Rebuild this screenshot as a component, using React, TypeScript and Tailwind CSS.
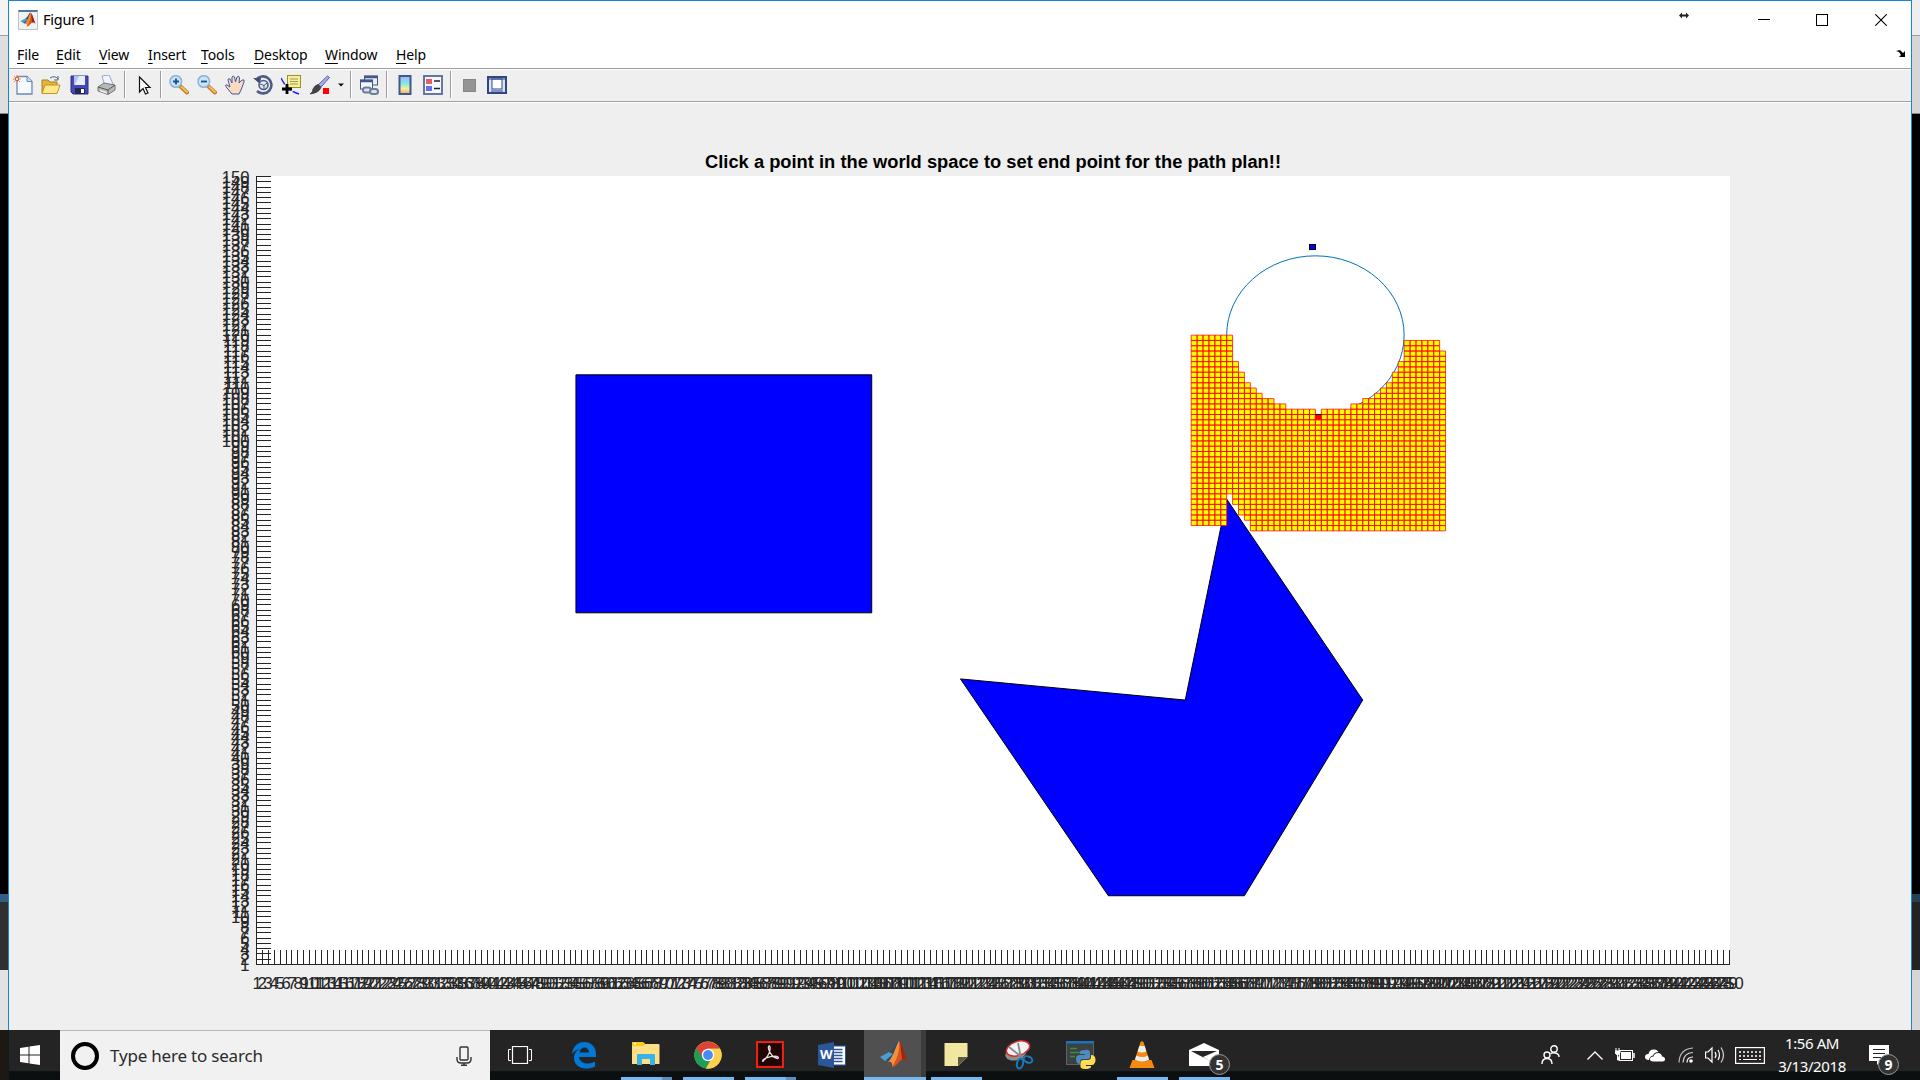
import React from "react";
import type { ReactNode } from "react";

/* ---------- helpers ---------- */

function Ico({ c = "", s = 20, children }: { c?: string; s?: number; children: ReactNode }) {
  return (
    <svg className={"block shrink-0 " + c} width={s} height={s} viewBox={`0 0 ${s} ${s}`} fill="none">
      {children}
    </svg>
  );
}

function MatlabMark() {
  return (
    <>
      <path d="M1 17 L10 12 L14 14 L9 20 L6 21 Z" fill="#4b9fd0" />
      <path d="M10 12 C14 11 15 6 18 2 L20 1 L16 14 L9 22 L7 20 L14 14 Z" fill="#2c4f6e" />
      <path d="M20 1 C23 4 25 13 29 22 C26 19 24 19 21 21 C18 24 16 27 13 27 C14 23 12 21 9 22 C14 18 17 6 20 1 Z" fill="#d9541e" />
      <path d="M20 1 C21 8 19 18 13 27 C14 23 12 21 9 22 C14 18 17 6 20 1 Z" fill="#f0913a" />
      <path d="M21 2 C24 6 26 15 29 22 C26 19 25 19 23 20 Z" fill="#9c2613" />
    </>
  );
}

/* ---------- menu bar ---------- */

const MENUS: [string, string][] = [
  ["File", "w-[39px]"],
  ["Edit", "w-[43px]"],
  ["View", "w-[49px]"],
  ["Insert", "w-[53px]"],
  ["Tools", "w-[53px]"],
  ["Desktop", "w-[71px]"],
  ["Window", "w-[71px]"],
  ["Help", "w-[40px]"],
];

function MenuBar() {
  return (
    <div className="flex h-[31px] shrink-0 items-center bg-white pt-[2px] pl-[8px] text-[14px] leading-[18px] tracking-[-0.12px] text-black">
      {MENUS.map(([m, w]) => (
        <span key={m} className={w}>
          <span className="underline underline-offset-[3px]">{m[0]}</span>
          {m.slice(1)}
        </span>
      ))}
      <svg className="mr-[5px] mb-[2px] ml-auto" width="10" height="8" viewBox="0 0 10 8">
        <path d="M0 1 L4 0 L7 3 L9 1 V7 H3 L5 5 L3 2 Z" fill="#000" />
      </svg>
    </div>
  );
}

/* ---------- toolbar ---------- */

function Sep({ c }: { c: string }) {
  return <div className={"h-[27px] w-[2px] shrink-0 border-l border-[#9b9b9b] bg-white " + c} />;
}

function Toolbar() {
  return (
    <div className="box-content flex h-[29px] shrink-0 items-center border-b border-[#a0a0a0] bg-[#efefef] pb-[2px]">
      <Ico c="ml-[4px]">
        <path d="M4 1.500 H14 L19 6.500 V19 H4 Z" fill="#f5faff" stroke="#6d87b8" strokeWidth="1.300" />
        <path d="M14 1.500 V6.500 H19" fill="#cfe0f5" stroke="#6d87b8" />
        <path d="M4 0 V8 M0 4 H8 M1 1 L7 7 M7 1 L1 7" stroke="#e98a55" />
        <circle cx="4" cy="4" r="1.600" fill="#fff" stroke="#d8582b" />
      </Ico>
      <Ico c="ml-[8px]">
        <path d="M1 5 H7 L9 7 H16 V18 H1 Z" fill="#e3b440" stroke="#a97e1a" />
        <path d="M4 10 H19 L16 18.500 H1 Z" fill="#ffe98a" stroke="#c39422" />
        <path d="M9 3 Q14 0 17 4 M17 1 V5 H13" stroke="#4a617b" />
      </Ico>
      <Ico c="ml-[9px]">
        <path d="M1 1 H18 V19 H3 L1 17 Z" fill="#4549b5" stroke="#2c2f85" />
        <rect x="4" y="1" width="11" height="9" fill="#e6ecfb" />
        <path d="M4 1 H9 L5 10 H4 Z" fill="#b4c4f0" />
        <rect x="5" y="13" width="10" height="6" fill="#23264f" />
        <rect x="11" y="14" width="3" height="4" fill="#fff" />
      </Ico>
      <Ico c="ml-[7px]">
        <path d="M5 1 L12 0 L16 9 L8 11 Z" fill="#f2f7ff" stroke="#93a9c8" />
        <path d="M1 12 L7 8 L18 10 V15 L11 19.500 L1 16 Z" fill="#b9b9b9" stroke="#777" />
        <path d="M1 12 L11 15 L18 10 M11 15 V19" stroke="#555" />
        <path d="M3 15.500 L10 18" stroke="#eee" strokeWidth="1.500" />
      </Ico>
      <Sep c="ml-[7px]" />
      <Ico c="ml-[9px]">
        <path d="M4.500 2 V17 L8 13.500 L10.500 19 L13 18 L10.500 12.500 H15 Z" fill="#fff" stroke="#111" strokeWidth="1.200" />
      </Ico>
      <Sep c="ml-[5px]" />
      {[true, false].map((plus) => (
        <Ico key={String(plus)} c={plus ? "ml-[7px]" : "ml-[8px]"}>
          <path d="M11.500 11.500 L18 17.500" stroke="#bf7b26" strokeWidth="4" strokeLinecap="round" />
          <path d="M12.500 12 L18 17" stroke="#f5bd62" strokeWidth="2" strokeLinecap="round" />
          <circle cx="6.800" cy="6.500" r="5.800" fill="#c5e6fa" stroke="#8fb1d4" strokeWidth="1.500" />
          <path d={plus ? "M4 6.500 H10 M7 3.500 V9.500" : "M4 6.500 H10"} stroke="#1f4e8c" strokeWidth="1.800" />
        </Ico>
      ))}
      <Ico c="ml-[8px]">
        <path
          d="M7 19 L2 13 Q-1 9 2 10 L5 12 L3 5 Q3 3 5 4 L7 8 L7 2 Q8 0 9.500 2 L10.500 7 L12 2 Q14 0 14.500 3 L14 8 L17 5 Q20 4 19 7 L16 15 L14 19 Z"
          fill="#fbdcc0"
          stroke="#40579b"
        />
      </Ico>
      <Ico c="ml-[8px]">
        <path d="M3 5 A8.500 8.500 0 1 1 4 16" stroke="#4b5d85" strokeWidth="2.600" />
        <path d="M0 3 H8 L7 9 Z" fill="#3f5078" />
        <circle cx="10.500" cy="10" r="4.500" fill="#dfe6f2" stroke="#4b5d85" strokeWidth="1.600" />
        <path d="M7 9 L11 10.500 L14 8 M11 10 V14" stroke="#4b5d85" />
      </Ico>
      <Ico c="ml-[8px]">
        <path d="M0 3 Q3 9 7 13 T18 19" stroke="#1b1bff" strokeWidth="1.400" strokeDasharray="7 2" />
        <rect x="6.500" y="0.500" width="13" height="12" fill="#f5f0a0" stroke="#9c8f2c" />
        <path d="M9 4 H17 M9 6.500 H17 M9 9 H17" stroke="#a69a45" />
        <path d="M1 14 H11 M6 9 V19" stroke="#000" strokeWidth="2.800" />
      </Ico>
      <Ico c="ml-[9px]">
        <path d="M17.500 1 L19.500 2.500 L11 12 L8 10 Z" fill="#a9aee8" stroke="#565aa8" />
        <path d="M8 9.500 L11 12.500 Q9 18 0 19 Q3 17 3 14 Q5 10 8 9.500 Z" fill="#444" stroke="#222" strokeWidth=".6" />
        <rect x="13" y="13" width="6" height="6" fill="#f00" />
      </Ico>
      <svg className="ml-[8px] block shrink-0" width="6" height="4" viewBox="0 0 6 4">
        <path d="M0 .5 H6 L3 3.500 Z" fill="#111" />
      </svg>
      <Sep c="ml-[6px]" />
      <Ico c="ml-[7px]">
        <rect x="5.500" y="1" width="13" height="9" fill="#e8eefb" stroke="#41578a" />
        <path d="M5 2 H19" stroke="#41578a" strokeWidth="2.500" />
        <rect x="1.500" y="5" width="12" height="9" fill="#f4f7fd" stroke="#41578a" />
        <path d="M1 6 H14" stroke="#41578a" strokeWidth="2.500" />
        <rect x="4" y="12.500" width="8" height="5" rx="2.500" stroke="#6c7e96" strokeWidth="2" fill="#dce3ec" />
        <rect x="11" y="14" width="8" height="5" rx="2.500" stroke="#6c7e96" strokeWidth="2" fill="#dce3ec" />
      </Ico>
      <Sep c="ml-[7px]" />
      <Ico c="ml-[7px]">
        <defs>
          <linearGradient id="cb" x1="0" y1="0" x2="0" y2="1">
            <stop offset="0" stopColor="#aab4ff" />
            <stop offset=".4" stopColor="#7fe6ea" />
            <stop offset=".7" stopColor="#f4f09a" />
            <stop offset="1" stopColor="#f2a185" />
          </linearGradient>
        </defs>
        <rect x="4.500" y="1" width="11" height="18" fill="url(#cb)" stroke="#41578a" strokeWidth="2" />
      </Ico>
      <Ico c="ml-[8px]">
        <rect x="1" y="1" width="18" height="18" fill="#f6f8fd" stroke="#54699c" strokeWidth="1.800" />
        <rect x="3" y="4" width="6" height="5" fill="#e75f5f" />
        <rect x="3" y="11" width="6" height="5" fill="#6d6de8" />
        <path d="M11 6 H17 M11 13.500 H17" stroke="#222" strokeWidth="1.500" />
      </Ico>
      <Sep c="ml-[7px]" />
      <Ico c="ml-[8px]">
        <rect x="3.500" y="4.500" width="12" height="12" fill="#949494" stroke="#868686" />
      </Ico>
      <Ico c="ml-[7px]">
        <rect x="1" y="2" width="18" height="16" fill="#dbe4f7" stroke="#2f4683" strokeWidth="2" />
        <rect x="5" y="4" width="10" height="10" fill="#fff" stroke="#2f4683" />
        <path d="M1 4 H19 M4 16 H16" stroke="#2f4683" />
      </Ico>
    </div>
  );
}

/* ---------- plot ---------- */

const X0 = 256.5;
const Y0 = 964.5;
const DX = 1473 / 249;
const DY = 788 / 149;
const px = (v: number) => X0 + (v - 1) * DX;
const py = (v: number) => Y0 - (v - 1) * DY;
const snap = (n: number) => Math.floor(n) + 0.5;

/* first and last occupied row of every expanded column, counted down from y = 120 */
const TOPS = [
  0, 0, 0, 0, 0, 0, 0, 5, 7, 9, 10, 11, 12, 12, 13, 13, 14, 14, 14, 14, 14, 15, 14, 14, 14, 14, 14, 13, 13, 12, 12, 11,
  10, 9, 7, 5, 1, 1, 1, 1, 1, 1, 3,
];
const BOTTOMS = [36, 36, 36, 36, 36, 36, 30, 32, 34, 35];

const poly = (pts: [number, number][]) => pts.map(([a, b]) => `${px(a)},${py(b)}`).join(" ");

function Plot() {
  const xs = Array.from({ length: 250 }, (_, i) => i + 1);
  const ys = Array.from({ length: 150 }, (_, i) => i + 1);
  const cols = TOPS.map((t, i) => ({ x: px(159 + i), t, b: BOTTOMS[i] ?? 37 }));
  const cells = cols
    .map(({ x, t, b }) => {
      let d = "";
      for (let r = t; r < b; r++) d += `M${x} ${py(120 - r)}h${DX}v${DY}h${-DX}z`;
      return d;
    })
    .join("");
  return (
    <svg className="block shrink-0" width="1902" height="927" viewBox="9 103 1902 927">
      <rect x="257" y="176" width="1473" height="788" fill="#fff" />
      <text x="993" y="167.500" textAnchor="middle" textLength="576" fontFamily="Liberation Sans, Arial, sans-serif" fontWeight="700" fontSize="18.300" fill="#000">
        Click a point in the world space to set end point for the path plan!!
      </text>
      <g stroke="#262626" fill="none" shapeRendering="crispEdges">
        <path d="M256.500 176 V964.500 H1730" />
        <path d={xs.map((v) => `M${snap(px(v))} 964V950`).join("")} />
        <path d={ys.map((v) => `M256 ${snap(py(v))}H270.500`).join("")} />
      </g>
      <g fontFamily="Liberation Sans, Arial, sans-serif" fontSize="16.600" fill="#262626">
        {xs.map((v) => (
          <text key={v} x={Math.round(px(v))} y="989" textAnchor="middle">
            {v}
          </text>
        ))}
        {ys.map((v) => (
          <text key={v} x="249.500" y={Math.round(py(v)) + 6} textAnchor="end">
            {v}
          </text>
        ))}
      </g>
      <g fill="#00f" stroke="#000">
        <polygon points={poly([[55, 112.5], [105, 112.5], [105, 67.5], [55, 67.5]])} />
        <polygon points={poly([[120, 55], [158, 51], [165, 89], [188, 51], [168, 14], [145, 14]])} />
        <rect x="1309.500" y="244.500" width="6" height="5" />
      </g>
      <ellipse cx={px(180)} cy={py(120)} rx={15 * DX} ry={15 * DY} fill="none" stroke="#0072bd" />
      {/* interior of the circle where the search front has erased the outline */}
      <path
        d={
          "M" +
          cols
            .slice(7, 27)
            .map(({ x, t }) => `${x} ${py(120 - t)}L${x + DX} ${py(120 - t)}`)
            .join("L") +
          `L${px(180)} ${py(120)}L${px(166)} ${py(120)}Z`
        }
        fill="#fff"
      />
      <path d={cells} fill="#ff0" stroke="#f00" strokeWidth="0.75" />
      <rect x={px(180)} y={py(105)} width={DX} height={DY} fill="#f00" />
      <path d={`M${px(180)} ${py(105)}h${DX}`} stroke="#000" />
    </svg>
  );
}

/* ---------- taskbar ---------- */

function TaskButton({ line = "", active = false, split = false, children }: { line?: string; active?: boolean; split?: boolean; children: ReactNode }) {
  return (
    <div className="flex h-[50px] w-[62px] shrink-0 flex-col justify-between">
      <div className={"flex h-[47px] w-full items-center justify-center pt-[3px] " + (active ? "border-r-[5px] border-[#3c3c3c] bg-[#505050] pl-[2px]" : "")}>{children}</div>
      {line !== "" && (
        <div className={"flex h-[3px] justify-end bg-[#76b9f2] " + line}>{split && <div className="h-[3px] w-[10px] bg-[#5b8fbe]" />}</div>
      )}
    </div>
  );
}

function Badge({ n, c }: { n: string; c: string }) {
  return (
    <span className={"absolute flex h-[21px] w-[21px] items-center justify-center rounded-full border border-[#999] bg-[#333] text-[14px] font-bold text-white " + c}>
      {n}
    </span>
  );
}

function Taskbar() {
  return (
    <div className="flex h-[50px] w-full bg-[linear-gradient(#242424_0_41px,#08141c_41px_42px,#0b0f10_42px)] text-white">
      <div className="h-[50px] w-[9px] border-r border-[#0b1b28] bg-[#1e1812]" />
      <div className="flex h-[50px] w-[51px] items-center pl-[11px]">
        <Ico>
          <path d="M0 3 L8.500 1.800 V9.500 H0 Z M9.500 1.600 L20 0 V9.500 H9.500 Z M0 10.500 H8.500 V18.200 L0 17 Z M9.500 10.500 H20 V20 L9.500 18.400 Z" fill="#fff" />
        </Ico>
      </div>
      <div className="flex h-[50px] w-[430px] items-center border-t border-[#b8b8b8] bg-[#f1f1f1] text-[#2b2b2b]">
        <div className="ml-[11px] h-[28px] w-[28px] rounded-full border-4 border-black" />
        <span className="ml-[11px] text-[17px] tracking-[-0.2px]">Type here to search</span>
        <svg className="mr-[18px] ml-auto" width="16" height="20" viewBox="0 0 16 20" fill="none" stroke="#333" strokeWidth="1.400">
          <rect x="4" y="1" width="8" height="13" rx="1" />
          <path d="M1 11 V13 Q1 17 5 17 H11 Q15 17 15 13 V11 M8 17 V19 M5 19.300 H11" />
        </svg>
      </div>
      <div className="flex h-[50px] w-[63px] items-center justify-center pr-[3px]">
        <svg width="24" height="18" viewBox="0 0 24 18" fill="none" stroke="#fff">
          <rect x="4.500" y=".5" width="15" height="17" strokeWidth="1.200" />
          <path d="M3 3.500 H.5 V14.500 H3 M21 3.500 H23.500 V14.500 H21" />
        </svg>
      </div>
      <TaskButton>
        <Ico s={28}>
          <path
            d="M2 13 C3 5 8 1 14 1 C22 1 26 7 26 13 V16 H9 C9.500 20 13 22.500 17 22.500 C20 22.500 22.500 22 25 20.500 V25.500 C22 27 19 27.500 16 27.500 C9 27.500 4 23 4 17 C4 12.500 6.500 9.500 10 8 C7 8.300 4 10 2 13 Z M9.500 11.500 H19 C19 8.500 17 6.500 14.500 6.500 C12 6.500 9.800 8.500 9.500 11.500 Z"
            fill="#0078d7"
            fillRule="evenodd"
          />
        </Ico>
      </TaskButton>
      <TaskButton line="ml-[6px] w-[51px]" split>
        <Ico s={28}>
          <path d="M0 2 Q0 1 1 1 H11 L13 3 H26.500 Q27.500 3 27.500 4 V23 H0 Z" fill="#fddf86" />
          <path d="M0 2 Q0 1 1 1 H11 L13 3 L12 5 H0 Z" fill="#fbc926" />
          <rect x="2" y="2" width="2" height="1.500" fill="#fff" />
          <path d="M5 14 Q5 13 6 13 H22 Q23 13 23 14 V24 H18 V18 H10 V24 H5 Z" fill="#37b3e6" />
        </Ico>
      </TaskButton>
      <TaskButton line="ml-[6px] w-[51px]">
        <Ico s={28}>
          <circle cx="14" cy="14" r="13.600" fill="#fcc934" />
          <path d="M14 14 L2.200 7.200 A13.600 13.600 0 0 0 12 27.450 L18 17 Z" fill="#1b9e58" />
          <path d="M2.200 7.200 A13.600 13.600 0 0 1 25.800 7.800 H14 L9 17 Z" fill="#db4437" />
          <path d="M14 7.800 H26.100 A13.600 13.600 0 0 1 12 27.450 L18 17 Z" fill="#fdd04d" />
          <circle cx="14" cy="14" r="6.200" fill="#fff" />
          <circle cx="14" cy="14" r="4.900" fill="#4a8af4" />
        </Ico>
      </TaskButton>
      <TaskButton line="ml-[6px] w-[51px]" split>
        <Ico s={28}>
          <rect x="1" y="1" width="26" height="25" fill="#230404" stroke="#ee1f10" strokeWidth="2" />
          <path
            d="M6 20 C10 19 15 11 14 6 C13.500 4 12 5 12.500 7.500 C13.500 12 17 17 21.500 17.500 C23.500 17 22 15 18 15.300 C14 15.500 10 16.500 7.500 18.500 C6 20 6.500 21 8 19.500"
            stroke="#e9dcdc"
            strokeWidth="1.300"
          />
        </Ico>
      </TaskButton>
      <TaskButton>
        <div className="relative flex h-[26px] w-[28px] items-center">
          <svg className="absolute inset-0" width="28" height="26" viewBox="0 0 28 26">
            <rect x="12" y="4" width="15.500" height="19" fill="#fff" stroke="#2b579a" />
            <path d="M16 7.500H24.500M16 10.500H24.500M16 13.500H24.500M16 16.500H24.500M16 19.500H24.500" stroke="#2b579a" strokeWidth="1.300" />
            <path d="M0 3 L16 0 V26 L0 23 Z" fill="#2b579a" />
          </svg>
          <span className="relative ml-[2px] text-[13px] font-bold text-white">W</span>
        </div>
      </TaskButton>
      <div className="w-[1px]" />
      <TaskButton active line="w-[62px]">
        <Ico s={30}>
          <MatlabMark />
        </Ico>
      </TaskButton>
      <TaskButton line="ml-[5px] w-[51px]">
        <Ico s={24} c="mr-[2px]">
          <path d="M.5 0 H23.500 V14 L14 23 H.5 Z" fill="#f1e7a0" />
          <path d="M23.500 14 L14 23 V14 Z" fill="#5c5a47" />
        </Ico>
      </TaskButton>
      <TaskButton>
        <Ico s={30}>
          <ellipse cx="12" cy="13" rx="11" ry="7" transform="rotate(-20 12 13)" fill="#8e8e8e" />
          <ellipse cx="14" cy="8.500" rx="12" ry="7" transform="rotate(-18 14 8.500)" fill="#f4f4f4" stroke="#d32f2f" strokeWidth="1.500" />
          <path d="M5 7 L19 18 M14 3 L17 18" stroke="#888" strokeWidth="1.800" />
          <ellipse cx="16" cy="23.500" rx="3" ry="5" transform="rotate(15 16 23.500)" stroke="#1979c0" strokeWidth="2" />
          <ellipse cx="24" cy="19.500" rx="4.500" ry="3" transform="rotate(25 24 19.500)" stroke="#1979c0" strokeWidth="2" />
        </Ico>
      </TaskButton>
      <TaskButton>
        <Ico s={30}>
          <rect x=".5" y="1.500" width="27" height="23" fill="#3b4043" stroke="#5d6265" />
          <rect x="0" y="1" width="28" height="2.500" fill="#1a72b8" />
          <path d="M4 8.500 H11 M4 12.500 H14 M4 16.500 H9" stroke="#3b8a42" strokeWidth="1.500" />
          <path d="M19 10 Q24 9 24 13 V17 Q24 19 21 19 H17 Q14 19 14 22 V24 Q10 24 10 19 Q10 15 14 15 H19 V14 H14 V12 Q14 10 19 10 Z" fill="#4b8bc0" />
          <path d="M19 29 Q14 29 14.500 26 V23 Q14.500 20 18 20 H22 Q25 20 25 17 V15 Q29.500 15 29.500 20 Q29.500 24 26 25 H20 V26 H25 V27 Q24 29 19 29 Z" fill="#ffdc51" />
        </Ico>
      </TaskButton>
      <TaskButton line="ml-[5px] w-[51px]">
        <Ico s={28} c="mr-[2px]">
          <path d="M4.500 19 H23.500 L26.500 27 H1.500 Z" fill="#f58a12" />
          <path d="M12.500 1 Q14 -.5 15.500 1 L21.500 20 Q14 25 6.500 20 Z" fill="#f58a12" />
          <path d="M11.400 5 H16.700 L18.300 10.500 Q14 12.500 9.600 10.500 Z M8.300 14.500 Q14 17.500 19.700 14.500 L21 18.500 Q14 22.500 7 18.500 Z" fill="#eee" />
        </Ico>
      </TaskButton>
      <TaskButton line="ml-[5px] w-[51px]">
        <div className="relative mr-[2px] h-[24px] w-[30px]">
          <svg width="30" height="24" viewBox="0 0 30 24">
            <path d="M0 7 L15 0 L30 7 V23 H0 Z" fill="#fff" />
            <path d="M2 8 H28 L14 14 L25 20 Z" fill="#242424" />
          </svg>
          <Badge n="5" c="top-[11px] left-[20px]" />
        </div>
      </TaskButton>
      <div className="ml-auto flex h-[50px] items-center">
        <svg className="mr-[27px]" width="19" height="20" viewBox="0 0 19 20" fill="none" stroke="#fff" strokeWidth="1.400">
          <circle cx="13" cy="4" r="3.200" />
          <circle cx="6" cy="10" r="3" />
          <path d="M1 19 Q1 13.500 6 13.500 Q11 13.500 11 19 M9.500 8.500 Q12 7.500 14 8 Q18 8.500 18 12" />
        </svg>
        <svg className="mr-[12px]" width="16" height="9" viewBox="0 0 16 9" fill="none" stroke="#fff" strokeWidth="1.300">
          <path d="M.5 8.500 L8 1 L15.500 8.500" />
        </svg>
        <svg className="mr-[10px]" width="20" height="14" viewBox="0 0 20 14" fill="none" stroke="#fff">
          <rect x="4.500" y="2.500" width="13" height="10" />
          <rect x="6" y="4" width="10" height="7" fill="#fff" stroke="none" />
          <path d="M19 5 V10" strokeWidth="1.500" />
          <path d="M1 0 V3 M4 0 V3 M0 3 H5 V5 L3.500 6.500 H1.500 L0 5 Z M2.500 6 V12 H5" fill="#fff" />
        </svg>
        <svg className="mr-[13px]" width="20" height="13" viewBox="0 0 20 13" fill="#fff">
          <path d="M4 11 Q0 11 0 8 Q0 5 3.500 5 Q4.500 0 9 .5 Q12 0 13.500 3 Q9 3 8 6.500 Q4.500 7 4 11 Z" />
          <path d="M8 12.500 Q5 12.500 5 10 Q5 7.500 8.500 7.500 Q9.500 4 13 4 Q16.500 4 17 7.500 Q20 8 20 10 Q20 12.500 17.500 12.500 Z" />
        </svg>
        <svg className="mr-[12px]" width="15" height="16" viewBox="0 0 15 16" fill="none" stroke="#fff" strokeWidth="1.200">
          <circle cx="13" cy="14" r="1.800" fill="#fff" stroke="none" />
          <path d="M9 15.500 Q9 10 15 10" />
          <path d="M5 15.500 Q5.500 6 15 5.500" opacity=".8" />
          <path d="M1 15.500 Q1.500 2 15 1" opacity=".7" />
        </svg>
        <svg className="mr-[9px]" width="21" height="18" viewBox="0 0 21 18" fill="none" stroke="#fff" strokeWidth="1.200">
          <path d="M.6 6 H3 L7 2 V16 L3 12 H.6 Z" />
          <path d="M10 6 Q12 9 10 12 M13 4 Q16 9 13 14" />
          <path d="M16 1.500 Q21 9 16 16.500" opacity=".8" />
        </svg>
        <svg className="mr-[12px]" width="30" height="17" viewBox="0 0 30 17" fill="none" stroke="#fff">
          <rect x=".6" y=".6" width="28.800" height="15.800" strokeWidth="1.200" />
          <path d="M4 5 H26 M4 9 H26" strokeDasharray="2 2" strokeWidth="1.300" />
          <path d="M4 12.500 H6 M8 12.500 H22 M24 12.500 H26" />
        </svg>
        <div className="flex w-[70px] flex-col items-center text-[15px] leading-[23px] tracking-[-0.4px] whitespace-nowrap">
          <span>1:56 AM</span>
          <span>3/13/2018</span>
        </div>
        <div className="relative mr-[31px] ml-[22px] h-[20px] w-[20px]">
          <svg width="20" height="20" viewBox="0 0 20 20">
            <path d="M0 0 H20 V16 H12 L8 20 V16 H0 Z" fill="#fff" />
            <path d="M4 4.500 H16 M4 8.500 H16 M4 12.500 H12" stroke="#242424" />
          </svg>
          <Badge n="9" c="top-[9px] left-[9px]" />
        </div>
      </div>
    </div>
  );
}

/* ---------- page ---------- */

export default function App() {
  return (
    <div className="flex h-[1080px] w-[1920px] flex-col overflow-hidden bg-black font-['Noto_Sans','Open_Sans',sans-serif]">
      <div className="flex h-[1030px] w-full">
        <div className="h-full w-[8px] bg-[linear-gradient(#f4f4f4_0_35px,#a0a0a0_35px_36px,#dedede_36px_113px,#888_113px_114px,#000_114px_894px,#315f88_894px_902px,#303030_902px_970px,#e2e2e2_970px)]" />
        <div className="flex h-full w-[1904px] flex-col border border-b-0 border-[#1883d7] bg-[#efefef]">
          <div className="flex h-[37px] shrink-0 items-center bg-white">
            <div className="ml-[9px] flex h-[20px] w-[20px] items-center justify-center border border-t-2 border-[#b9c2cc] border-t-[#4b7aa5] bg-[#f2f2f2]">
              <svg width="16" height="16" viewBox="0 0 30 30">
                <MatlabMark />
              </svg>
            </div>
            <span className="ml-[5px] text-[14.500px] tracking-[-0.25px] text-black">Figure 1</span>
            <svg className="mr-[69px] mb-[9px] ml-auto" width="10" height="7" viewBox="0 0 10 7">
              <path d="M0 3.500 L3 .5 V2.500 H7 V.5 L10 3.500 L7 6.500 V4.500 H3 V6.500 Z" fill="#222" />
            </svg>
            <div className="mr-[46px] h-px w-[12px] bg-black" />
            <div className="mr-[47px] h-[12px] w-[12px] border border-black" />
            <svg className="mr-[24px]" width="12" height="12" viewBox="0 0 12 12" stroke="#000" strokeWidth="1.100">
              <path d="M.3 .3 L11.700 11.700 M11.700 .3 L.3 11.700" />
            </svg>
          </div>
          <MenuBar />
          <div className="-mt-px h-[2px] shrink-0 border-t border-[#a0a0a0] bg-white" />
          <Toolbar />
          <div className="h-px shrink-0 bg-white" />
          <Plot />
        </div>
        <div className="h-full w-[8px] bg-[linear-gradient(#eeeeee_0_35px,#a0a0a0_35px_36px,#d6d6d6_36px_113px,#888_113px_114px,#000_114px_894px,#253f55_894px_902px,#232323_902px_970px,#d6d6d6_970px)]" />
      </div>
      <Taskbar />
    </div>
  );
}
